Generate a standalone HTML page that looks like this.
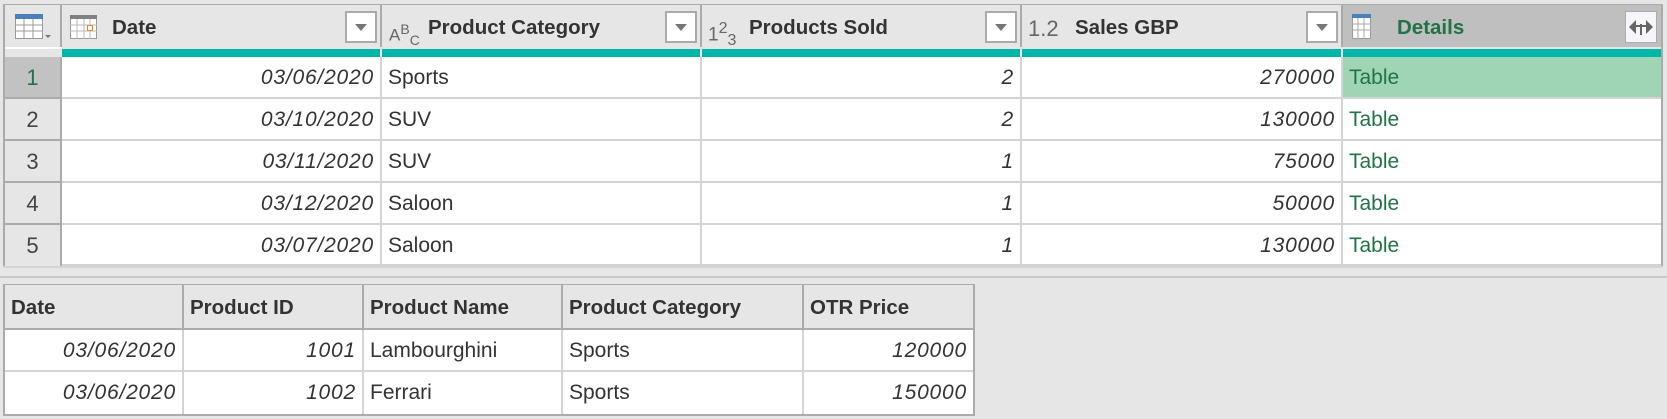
<!DOCTYPE html>
<html><head><meta charset="utf-8"><style>
body{margin:0;width:1667px;height:419px;background:#e6e6e6;font-family:"Liberation Sans",sans-serif;position:relative;overflow:hidden;color:#333}
.a{position:absolute;box-sizing:border-box}
.h{background:#e6e6e6;border-right:2px solid #ababab;height:42px;top:5px;font-weight:bold;font-size:20.5px;line-height:46px;color:#333;white-space:nowrap}
.c{background:#fff;border-right:2px solid #d4d4d4;border-bottom:2px solid #d4d4d4;font-size:21px;line-height:41px;padding:0 6px;white-space:nowrap;color:#333}
.r{text-align:right;font-style:italic;letter-spacing:0.8px}
.n{background:#e6e6e6;border-right:2px solid #ababab;border-bottom:2px solid #ababab;text-align:center;font-size:22px;line-height:41px;color:#444}
.dd{position:absolute;width:32px;height:32px;top:5px;background:#fff;border:2px solid #aaa;box-sizing:border-box}
.dd:after{content:"";position:absolute;left:8px;top:11px;border-left:6px solid transparent;border-right:6px solid transparent;border-top:7px solid #777}
.g{color:#217346}
.h2{background:#e6e6e6;border-right:2px solid #ababab;font-weight:bold;font-size:20.5px;line-height:46px;padding-left:6px;top:285px;height:45px;white-space:nowrap}
</style></head><body>
<div class="a" style="left:3px;top:4px;width:1660px;height:264px;border:2px solid #ababab;background:#e6e6e6"></div>
<div class="a h" style="left:5px;width:57px"></div>
<svg class="a" style="left:15px;top:14px" width="36" height="26" viewBox="0 0 36 26"><rect x="0.5" y="0.5" width="27" height="24" fill="#fff" stroke="#999"/><rect x="0" y="0" width="28" height="5" fill="#4a7fbd"/><path d="M0 11H28M0 17H28M9 5V25M18 5V25" stroke="#999"/><path d="M30 21h6l-3 3z" fill="#777"/></svg>
<div class="a h" style="left:62px;width:320px;padding-left:50px">Date</div>
<svg class="a" style="left:70px;top:15px" width="27" height="24"><rect x="0.5" y="0.5" width="26" height="23" fill="#fff" stroke="#999"/><rect width="27" height="4" fill="#808080"/><path d="M0 10H27M0 16H27M7 4V24M14 4V24M20 4V24" stroke="#bbb"/><rect x="17.5" y="10.5" width="5" height="5" fill="#fff" stroke="#e8852b"/></svg>
<div class="dd" style="left:345px;top:11px"></div>
<div class="a h" style="left:382px;width:320px;padding-left:46px">Product Category</div>
<div class="a" style="left:389px;top:19px;font-size:17px;color:#666;line-height:20px">A<sup style="font-size:14px">B</sup><sub style="font-size:14px">C</sub></div>
<div class="dd" style="left:665px;top:11px"></div>
<div class="a h" style="left:702px;width:320px;padding-left:47px">Products Sold</div>
<div class="a" style="left:708px;top:17px;font-size:19px;color:#666;line-height:24px">1<sup style="font-size:16px">2</sup><sub style="font-size:16px">3</sub></div>
<div class="dd" style="left:985px;top:11px"></div>
<div class="a h" style="left:1022px;width:321px;padding-left:53px">Sales GBP</div>
<div class="a" style="left:1028px;top:17px;font-size:22px;color:#666;line-height:24px">1.2</div>
<div class="dd" style="left:1306px;top:11px"></div>
<div class="a h g" style="left:1343px;width:318px;padding-left:54px;background:#bfbfbf;border-right:none">Details</div>
<svg class="a" style="left:1352px;top:14px" width="20" height="26"><rect x="0.5" y="0.5" width="18" height="24" fill="#fff" stroke="#999"/><rect width="19" height="4" fill="#4a7fbd"/><path d="M0 10H19M0 16H19M6 4V25M12 4V25" stroke="#aaa"/></svg>
<div class="a" style="left:1625px;top:11px;width:32px;height:32px;background:#f4f6fa;border:1px solid #aab"></div>
<svg class="a" style="left:1628px;top:18px" width="26" height="18"><path d="M1 9L8 2V16Z M25 9L18 2V16Z" fill="#666"/><path d="M8 7H18V9H14V16H12V9H8Z" fill="#666"/><rect x="12" y="6" width="2" height="11" fill="#666"/></svg>
<div class="a" style="left:5px;top:47px;width:1656px;height:10px;background:#e6e6e6"></div>
<div class="a" style="left:5px;top:47px;width:57px;height:10px;border-top:2px solid #fff;background:#e6e6e6"></div>
<div class="a" style="left:62px;top:49px;width:1599px;height:8px;background:#00b6a8"></div>
<div class="a" style="left:380px;top:49px;width:2px;height:8px;background:#fff"></div>
<div class="a" style="left:700px;top:49px;width:2px;height:8px;background:#fff"></div>
<div class="a" style="left:1020px;top:49px;width:2px;height:8px;background:#fff"></div>
<div class="a" style="left:1341px;top:49px;width:2px;height:8px;background:#fff"></div>
<div class="a n g" style="left:5px;top:57px;width:57px;height:42px;background:#c2c2c2">1</div>
<div class="a c r" style="left:62px;top:57px;width:320px;height:42px">03/06/2020</div>
<div class="a c" style="left:382px;top:57px;width:320px;height:42px">Sports</div>
<div class="a c r" style="left:702px;top:57px;width:320px;height:42px">2</div>
<div class="a c r" style="left:1022px;top:57px;width:321px;height:42px">270000</div>
<div class="a c g" style="left:1343px;top:57px;width:318px;height:42px;background:#9fd5b5;border-right:none">Table</div>
<div class="a n" style="left:5px;top:99px;width:57px;height:42px">2</div>
<div class="a c r" style="left:62px;top:99px;width:320px;height:42px">03/10/2020</div>
<div class="a c" style="left:382px;top:99px;width:320px;height:42px">SUV</div>
<div class="a c r" style="left:702px;top:99px;width:320px;height:42px">2</div>
<div class="a c r" style="left:1022px;top:99px;width:321px;height:42px">130000</div>
<div class="a c g" style="left:1343px;top:99px;width:318px;height:42px;border-right:none">Table</div>
<div class="a n" style="left:5px;top:141px;width:57px;height:42px">3</div>
<div class="a c r" style="left:62px;top:141px;width:320px;height:42px">03/11/2020</div>
<div class="a c" style="left:382px;top:141px;width:320px;height:42px">SUV</div>
<div class="a c r" style="left:702px;top:141px;width:320px;height:42px">1</div>
<div class="a c r" style="left:1022px;top:141px;width:321px;height:42px">75000</div>
<div class="a c g" style="left:1343px;top:141px;width:318px;height:42px;border-right:none">Table</div>
<div class="a n" style="left:5px;top:183px;width:57px;height:42px">4</div>
<div class="a c r" style="left:62px;top:183px;width:320px;height:42px">03/12/2020</div>
<div class="a c" style="left:382px;top:183px;width:320px;height:42px">Saloon</div>
<div class="a c r" style="left:702px;top:183px;width:320px;height:42px">1</div>
<div class="a c r" style="left:1022px;top:183px;width:321px;height:42px">50000</div>
<div class="a c g" style="left:1343px;top:183px;width:318px;height:42px;border-right:none">Table</div>
<div class="a n" style="left:5px;top:225px;width:57px;height:41px;border-bottom:none">5</div>
<div class="a c r" style="left:62px;top:225px;width:320px;height:41px">03/07/2020</div>
<div class="a c" style="left:382px;top:225px;width:320px;height:41px">Saloon</div>
<div class="a c r" style="left:702px;top:225px;width:320px;height:41px">1</div>
<div class="a c r" style="left:1022px;top:225px;width:321px;height:41px">130000</div>
<div class="a c g" style="left:1343px;top:225px;width:318px;height:41px;border-right:none">Table</div>
<div class="a" style="left:3px;top:266px;width:1660px;height:2px;background:#d4d4d4"></div>
<div class="a" style="left:0;top:276px;width:1667px;height:2px;background:#c8c8c8"></div>
<div class="a" style="left:3px;top:284px;width:972px;height:132px;border:2px solid #ababab;background:#fff"></div>
<div class="a h2" style="left:5px;width:179px">Date</div>
<div class="a h2" style="left:184px;width:180px">Product ID</div>
<div class="a h2" style="left:364px;width:199px">Product Name</div>
<div class="a h2" style="left:563px;width:241px">Product Category</div>
<div class="a h2" style="left:804px;width:169px;border-right:none">OTR Price</div>
<div class="a" style="left:5px;top:328px;width:968px;height:2px;background:#ababab"></div>
<div class="a c r" style="left:5px;top:330px;width:179px;height:42px">03/06/2020</div>
<div class="a c r" style="left:184px;top:330px;width:180px;height:42px">1001</div>
<div class="a c" style="left:364px;top:330px;width:199px;height:42px">Lambourghini</div>
<div class="a c" style="left:563px;top:330px;width:241px;height:42px">Sports</div>
<div class="a c r" style="left:804px;top:330px;width:169px;height:42px;border-right:none">120000</div>
<div class="a c r" style="left:5px;top:372px;width:179px;height:42px;border-bottom:none">03/06/2020</div>
<div class="a c r" style="left:184px;top:372px;width:180px;height:42px;border-bottom:none">1002</div>
<div class="a c" style="left:364px;top:372px;width:199px;height:42px;border-bottom:none">Ferrari</div>
<div class="a c" style="left:563px;top:372px;width:241px;height:42px;border-bottom:none">Sports</div>
<div class="a c r" style="left:804px;top:372px;width:169px;height:42px;border:none">150000</div>
</body></html>
